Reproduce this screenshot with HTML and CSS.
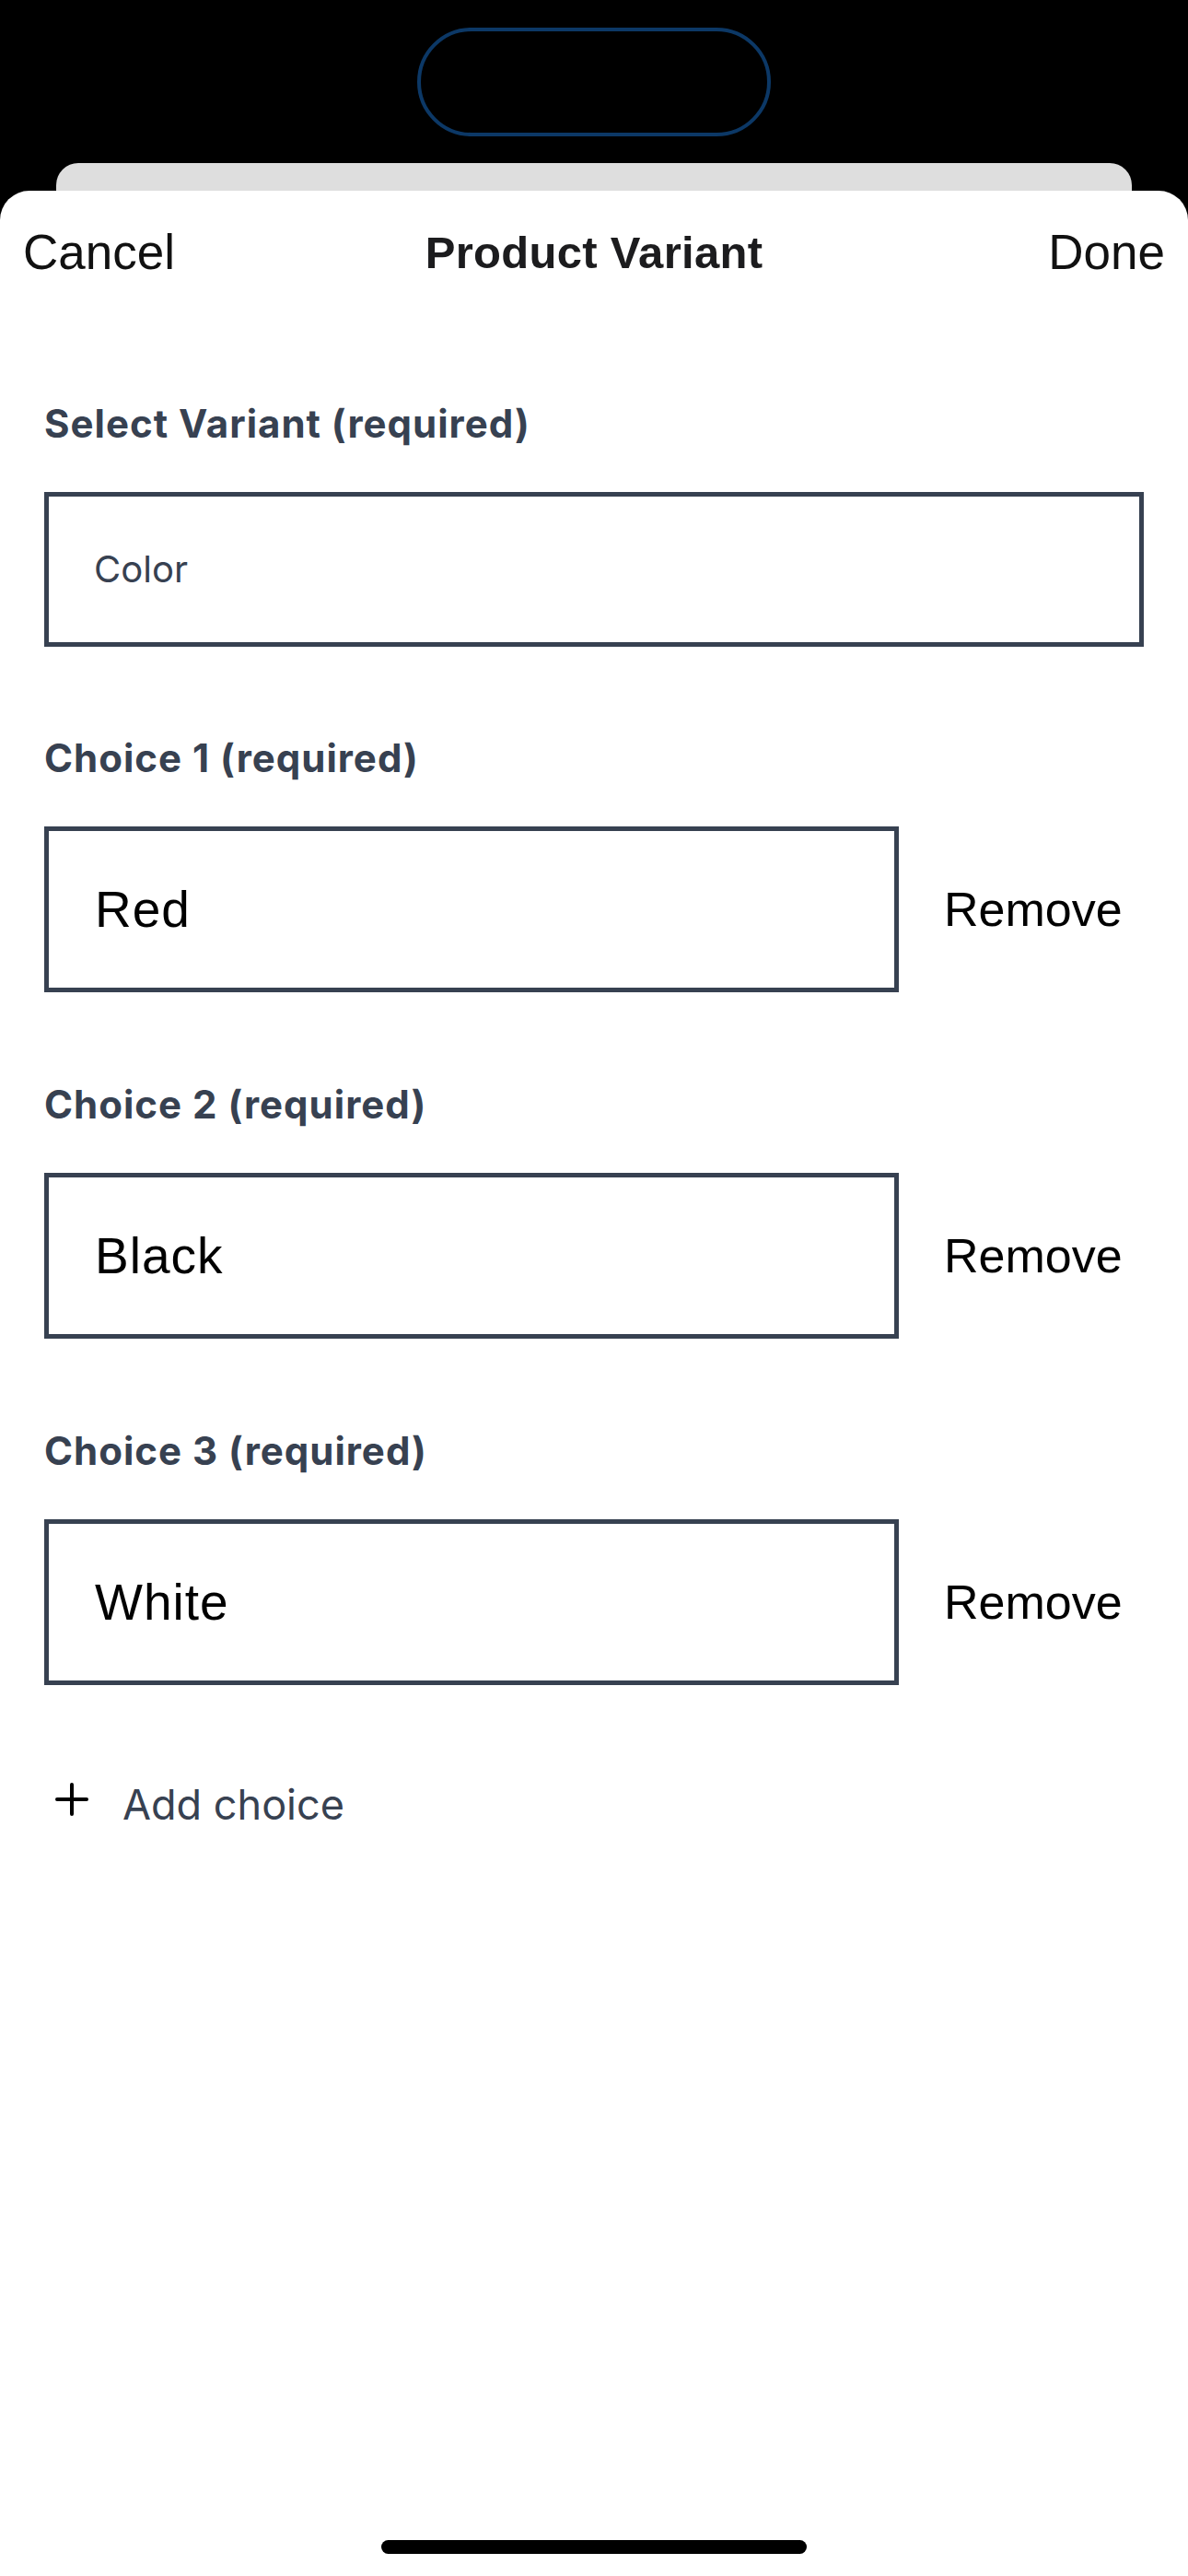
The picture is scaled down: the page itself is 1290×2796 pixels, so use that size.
FILE: index.html
```html
<!DOCTYPE html>
<html lang="en">
<head>
<meta charset="utf-8">
<title>Product Variant</title>
<link rel="stylesheet" href="styles.css">
</head>
<body>
<div class="device">
  <div class="top">
    <div class="island"></div>
  </div>
  <div class="backcard"></div>
  <div class="sheet">
    <header class="navbar">
      <span class="nav-btn nav-left">Cancel</span>
      <span class="nav-title">Product Variant</span>
      <span class="nav-btn nav-right">Done</span>
    </header>
    <main class="form">
      <section class="group group-select">
        <div class="label">Select Variant (required)</div>
        <div class="select-box"><span class="select-text">Color</span></div>
      </section>
      <section class="group">
        <div class="label">Choice 1 (required)</div>
        <div class="choice-row">
          <div class="choice-box"><span class="choice-text">Red</span></div>
          <span class="remove">Remove</span>
        </div>
      </section>
      <section class="group">
        <div class="label">Choice 2 (required)</div>
        <div class="choice-row">
          <div class="choice-box"><span class="choice-text">Black</span></div>
          <span class="remove">Remove</span>
        </div>
      </section>
      <section class="group group-last">
        <div class="label">Choice 3 (required)</div>
        <div class="choice-row">
          <div class="choice-box"><span class="choice-text">White</span></div>
          <span class="remove">Remove</span>
        </div>
      </section>
      <div class="add-row">
        <svg class="plus" width="36" height="36" viewBox="0 0 36 36" aria-hidden="true">
          <path d="M18 2 V34 M2 18 H34" stroke="#000" stroke-width="4" stroke-linecap="round" fill="none"/>
        </svg>
        <span class="add-text">Add choice</span>
      </div>
    </main>
    <div class="spacer"></div>
    <div class="home-indicator"></div>
  </div>
</div>
</body>
</html>
```

FILE: styles.css
```css
html, body {
  margin: 0;
  padding: 0;
  background: #000;
}

.device {
  width: 1290px;
  height: 2796px;
  display: flex;
  flex-direction: column;
  background: #000;
  overflow: hidden;
}

.top {
  height: 177px;
  box-sizing: border-box;
  padding-top: 30px;
  flex-shrink: 0;
}

.island {
  width: 384px;
  height: 118px;
  margin: 0 auto;
  box-sizing: border-box;
  border: 4px solid #0c3866;
  border-radius: 60px;
}

.backcard {
  height: 30px;
  margin: 0 61px;
  background: #dedede;
  border-radius: 24px 24px 0 0;
  flex-shrink: 0;
}

.sheet {
  flex: 1;
  background: #fff;
  border-radius: 32px 32px 0 0;
  display: flex;
  flex-direction: column;
}

.navbar {
  display: grid;
  grid-template-columns: 1fr auto 1fr;
  align-items: center;
  padding: 38px 25px 0 25px;
  font-family: "Liberation Sans", Arial, sans-serif;
  line-height: 58px;
  color: #111;
}

.nav-btn {
  font-size: 53px;
}

.nav-left {
  justify-self: start;
}

.nav-right {
  justify-self: end;
}

.nav-title {
  font-size: 49px;
  font-weight: bold;
  letter-spacing: 0.3px;
  color: #1c1c1e;
}

.form {
  padding: 132px 48px 0;
}

.group {
  margin-bottom: 97px;
}

.group-select {
  margin-bottom: 96px;
}

.group-last {
  margin-bottom: 102px;
}

.label {
  font-family: Inter, "Noto Sans", sans-serif;
  font-weight: 700;
  font-size: 42px;
  letter-spacing: 1px;
  line-height: 50px;
  color: #374151;
  margin-bottom: 49px;
}

.select-box {
  height: 168px;
  box-sizing: border-box;
  border: 5px solid #374151;
  padding-left: 49px;
  display: flex;
  align-items: center;
}

.select-text {
  font-family: Inter, "Noto Sans", sans-serif;
  font-size: 40px;
  line-height: 50px;
  color: #374151;
}

.choice-row {
  display: grid;
  grid-template-columns: 928px auto;
  column-gap: 49px;
  align-items: center;
}

.choice-box {
  height: 180px;
  box-sizing: border-box;
  border: 5px solid #374151;
  padding-left: 50px;
  display: flex;
  align-items: center;
}

.choice-text {
  font-family: "Liberation Sans", Arial, sans-serif;
  font-size: 55px;
  letter-spacing: 1px;
  color: #000;
}

.remove {
  font-family: "Liberation Sans", Arial, sans-serif;
  font-size: 52px;
  color: #000;
}

.add-row {
  display: flex;
  align-items: center;
  padding-left: 12px;
  height: 56px;
}

.plus {
  flex-shrink: 0;
  margin-right: 37px;
  margin-bottom: 13px;
}

.add-text {
  font-family: Inter, "Noto Sans", sans-serif;
  font-size: 45px;
  line-height: 56px;
  color: #374151;
}

.spacer {
  flex: 1;
}

.home-indicator {
  width: 462px;
  height: 15px;
  border-radius: 8px;
  background: #000;
  margin: 0 auto 24px;
}
```
